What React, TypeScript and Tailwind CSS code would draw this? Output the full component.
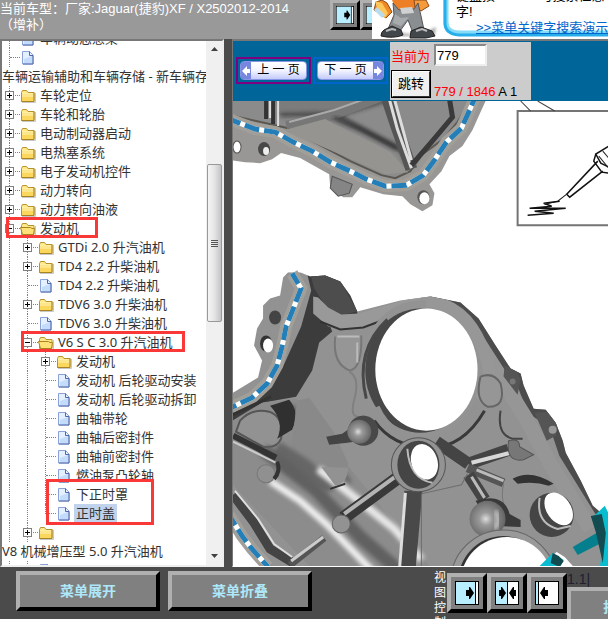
import { useState } from 'react';

interface TreeRow {
  label: string;
  level?: number;
  kind: 'folder' | 'open' | 'file' | 'text';
  last?: boolean;
}

const rows: TreeRow[] = [
  { label: '车辆动态悬架', level: 0, kind: 'file' },
  { label: '', level: 0, kind: 'file' },
  { label: '车辆运输辅助和车辆存储 - 新车辆存储', kind: 'text' },
  { label: '车轮定位', level: 0, kind: 'folder' },
  { label: '车轮和轮胎', level: 0, kind: 'folder' },
  { label: '电动制动器启动', level: 0, kind: 'folder' },
  { label: '电热塞系统', level: 0, kind: 'folder' },
  { label: '电子发动机控件', level: 0, kind: 'folder' },
  { label: '动力转向', level: 0, kind: 'folder' },
  { label: '动力转向油液', level: 0, kind: 'folder' },
  { label: '发动机', level: 0, kind: 'open' },
  { label: 'GTDi 2.0 升汽油机', level: 1, kind: 'folder' },
  { label: 'TD4 2.2 升柴油机', level: 1, kind: 'folder' },
  { label: 'TD4 2.2 升柴油机', level: 1, kind: 'file' },
  { label: 'TDV6 3.0 升柴油机', level: 1, kind: 'folder' },
  { label: 'TDV6 3.0 升柴油机', level: 1, kind: 'file' },
  { label: 'V6 S C 3.0 升汽油机', level: 1, kind: 'open' },
  { label: '发动机', level: 2, kind: 'folder' },
  { label: '发动机 后轮驱动安装', level: 2, kind: 'file' },
  { label: '发动机 后轮驱动拆卸', level: 2, kind: 'file' },
  { label: '曲轴带轮', level: 2, kind: 'file' },
  { label: '曲轴后密封件', level: 2, kind: 'file' },
  { label: '曲轴前密封件', level: 2, kind: 'file' },
  { label: '燃油泵凸轮轴', level: 2, kind: 'file' },
  { label: '下正时罩', level: 2, kind: 'file' },
  { label: '正时盖', level: 2, kind: 'file', last: true },
  { label: '', level: 1, kind: 'folder' },
  { label: 'V8 机械增压型 5.0 升汽油机', kind: 'text' },
  { label: '', level: 1, kind: 'file' },
];

function FolderIcon({ open }: { open: boolean }) {
  return (
    <svg width="16" height="16" viewBox="0 0 16 16" className="shrink-0">
      <path d="M2 14.5h13.5V5" fill="none" stroke="#c8c8c8" />
      <path d="M1.5 4.5l1-2h4l1.500 2h6v9h-12.500z" fill="#ffe98a" stroke="#b8932c" />
      {open ? (
        <path d="M.5 6.500h10l1.500 1h2.500l-1 6h-11z" fill="#ffe277" stroke="#a98420" />
      ) : (
        <path d="M2 6h11.500v7H2z" fill="#fbd75e" />
      )}
      {!open && <path d="M2 6h11.500M2 8h11.500" stroke="#fff4b8" />}
      {!open && <path d="M1.500 13.500h12.500v-9" fill="none" stroke="#a98420" />}
    </svg>
  );
}

function FileIcon() {
  return (
    <svg width="16" height="16" viewBox="0 0 16 16" className="shrink-0">
      <path d="M2.500 1.500h7l3.500 3.500v9H2.500z" fill="#e4f0ff" stroke="#8aa2d8" />
      <path d="M4 9l8-3v7H4z" fill="#c4dcfb" />
      <path d="M9.500 1.500v4H13v8.500H3" fill="none" stroke="#5069ac" />
    </svg>
  );
}

function Guide({ half = false }: { half?: boolean }) {
  return (
    <span className="flex h-full w-[18px] shrink-0 pl-[7px]">
      <span className={`${half ? 'h-1/2' : 'h-full'} border-l border-dotted border-[#808080]`} />
    </span>
  );
}

function Connector({ row }: { row: TreeRow }) {
  return (
    <span className="relative flex h-full w-[18px] shrink-0">
      <Guide half={row.last} />
      <span className="absolute top-[9px] left-[8px] w-[10px] border-t border-dotted border-[#808080]" />
      {row.kind !== 'file' && (
        <svg className="absolute top-[5px] left-[3px]" width="9" height="9" viewBox="0 0 9 9">
          <rect x=".5" y=".5" width="8" height="8" fill="#fff" stroke="#808080" />
          <path d={row.kind === 'folder' ? 'M2 4.500h5M4.500 2v5' : 'M2 4.500h5'} stroke="#000" />
        </svg>
      )}
    </span>
  );
}

function Tree() {
  const [selected, setSelected] = useState(25);

  return (
    <ul className="-mt-3 text-[13px] leading-[19px] whitespace-nowrap text-[#333]">
      {rows.map((row, index) => (
        <li key={index}>
          <button type="button" onClick={() => setSelected(index)} className="flex h-[19px] items-center text-left">
            {row.level !== undefined && (
              <>
                {row.level > 0 && <Guide />}
                {row.level > 1 && <Guide />}
                <Connector row={row} />
                {row.kind === 'file' ? <FileIcon /> : <FolderIcon open={row.kind === 'open'} />}
              </>
            )}
            {row.label && (
              <span className={row.kind === 'text' ? '' : index === selected ? 'ml-0.5 bg-[#c0d2ec] px-0.5' : 'ml-1'}>
                {row.label}
              </span>
            )}
          </button>
        </li>
      ))}
    </ul>
  );
}

function Scrollbar() {
  return (
    <div className="flex w-4 shrink-0 flex-col items-center bg-[#f0f0f0]">
      <svg width="15" height="17" viewBox="0 0 15 17">
        <path d="M4 10h7L7.500 6z" fill="#404040" />
      </svg>
      <div className="h-[106px]" />
      <div className="flex h-[158px] w-[15px] flex-col items-center justify-center gap-px rounded-xs border border-[#999] bg-linear-to-r from-[#f5f5f5] via-[#e4e4e4] to-[#c4c4c8]">
        <span className="h-px w-[7px] bg-[#555]" />
        <span className="h-px w-[7px] bg-[#555]" />
        <span className="h-px w-[7px] bg-[#555]" />
        <span className="h-px w-[7px] bg-[#555]" />
      </div>
      <svg className="mt-auto" width="15" height="17" viewBox="0 0 15 17">
        <path d="M4 6h7l-3.500 4z" fill="#404040" />
      </svg>
    </div>
  );
}

type View = 'left' | 'both' | 'right';

function ViewButton({ view, label, small = false }: { view: View; label: string; small?: boolean }) {
  return (
    <button
      type="button"
      aria-label={label}
      className={`flex shrink-0 items-center justify-center border-t-[#b0b0b0] border-r-black border-b-black border-l-[#b0b0b0] bg-[#808080] ${small ? 'h-[30px] w-[30px] border-[3px]' : 'h-10 w-10 border-4'}`}
    >
      <svg width={small ? 18 : 24} height={small ? 18 : 24} viewBox="0 0 24 24">
        <rect x=".5" y=".5" width="23" height="23" fill="#fff" stroke="#000" />
        {view === 'left' && <path d="M1 1h19v22H1z" fill="#b8eeff" />}
        {view === 'both' && <path d="M1 1h11v22H1z" fill="#b8eeff" />}
        {view === 'right' && <path d="M1 1h2v22H1z" fill="#b8eeff" />}
        <path d={view === 'left' ? 'M20.500 1v22' : view === 'both' ? 'M12.500 1v22' : 'M3.500 1v22'} stroke="#000" />
        {view === 'left' && <path d="M11 9h3V6h1l4 6-4 6h-1v-3h-3z" />}
        {view === 'both' && <path d="M4 9h2V6h1l4 6-4 6H6v-3H4zM21 9h-2V6h-1l-4 6 4 6h1v-3h2z" />}
        {view === 'right' && <path d="M13 9h-3V6H9l-4 6 4 6h1v-3h3z" />}
      </svg>
    </button>
  );
}

function Mascot() {
  return (
    <svg width="72" height="39" viewBox="0 0 72 39" className="shrink-0">
      <defs>
        <filter id="shade">
          <feGaussianBlur stdDeviation="1.500" />
        </filter>
      </defs>
      <path d="M20 30q25 10 44-3l-2 9H14z" fill="#999" filter="url(#shade)" />
      <path d="M4 2l6-2 5 3 5 9-6 6-7-5-5-3z" fill="#ee8a25" stroke="#8b4b18" />
      <path d="M3 1l7 2 6 10-3 5-7-7z" fill="#ffc65a" />
      <path d="M5 7l8 8-3 3-8-8z" fill="#b8dbed" />
      <path d="M20 0h31v5l-4 6H24z" fill="#ed8026" />
      <path d="M42 0h12l3 6-8 5-6-4z" fill="#f59b3c" stroke="#8b4b18" />
      <path d="M21 3l6 7 15-1 4-6 3 13 3 14-11 3-5-13-8 11-12-2 6-14z" fill="#8b8e90" stroke="#555" />
      <path d="M28 8l12-1 2 6-12 1z" fill="#cfd2d3" />
      <path d="M23 14l6 4 8-1-8 9-8-3z" fill="#a8abad" />
      <path d="M12 30l8-4 9 4 2 5q-10 4-22 1 0-4 3-6z" fill="#42474c" stroke="#222" />
      <path d="M39 31l10-4 11 4 3 5-9 2H38z" fill="#42474c" stroke="#222" />
      <path d="M14 31l6-2 4 1M44 31l6-2 5 2" fill="none" stroke="#bbb" strokeWidth="2" />
    </svg>
  );
}

function SearchAd() {
  return (
    <aside className="absolute top-0 right-0 flex h-[39px] w-[236px] overflow-hidden bg-white text-black">
      <Mascot />
      <svg className="absolute top-0 left-[70px]" width="166" height="39" viewBox="0 0 166 39">
        <path d="M4 0v22q0 11 13 11h149" fill="none" stroke="#86dcf8" strokeWidth="5" />
        <path d="M3 0v23q0 11 14 12h149" fill="none" stroke="#28aeea" strokeWidth="3" />
      </svg>
      <div className="relative -mt-3 ml-3 text-[13px] leading-4 whitespace-nowrap">
        <p>键盘按“Ctrl+F”可搜索任意</p>
        <p>字!</p>
        <a href="#search" className="ml-5 block text-[#0066cc] underline">&gt;&gt;菜单关键字搜索演示</a>
      </div>
    </aside>
  );
}

function PageButton({ label, next = false }: { label: string; next?: boolean }) {
  const arrow = (
    <span className="flex w-[10px] items-center justify-center bg-[#7786de]">
      <svg width="8" height="10" viewBox="0 0 8 10">
        <path d={next ? 'M0 3h3V0l5 5-5 5V7H0z' : 'M8 3H5V0L0 5l5 5V7h3z'} fill="#fff" />
      </svg>
    </span>
  );

  return (
    <button
      type="button"
      className={`border-2 p-0.5 ${next ? 'border-[#0066cc]' : 'border-[#800080]'}`}
    >
      <span className="flex h-[19px] w-[67px] rounded-sm border border-[#8795e4] bg-linear-to-b from-white via-[#f3f4ff] to-[#c4cbfa] text-[12px] leading-[17px] text-black">
        {!next && arrow}
        <span className="flex-1 text-center whitespace-nowrap">{label}</span>
        {next && arrow}
      </span>
    </button>
  );
}

function Toolbar() {
  const [page, setPage] = useState('779');

  return (
    <div className="flex h-[60px] shrink-0 items-start bg-[#006699]">
      <div className="flex gap-0.5 pt-4 pl-[3px]">
        <PageButton label="上 一 页" />
        <PageButton label="下 一 页" next />
      </div>
      <form
        onSubmit={(event) => event.preventDefault()}
        className="mt-px ml-0.5 grid h-[58px] w-[141px] grid-cols-[41px_1fr] content-start gap-x-0.5 bg-[#ccc] pt-0.5 pl-px text-[13px] whitespace-nowrap"
      >
        <label htmlFor="page" className="pt-0.5 leading-[22px] text-[red]">当前为</label>
        <input
          id="page"
          value={page}
          onChange={(event) => setPage(event.target.value)}
          className="h-[22px] w-[53px] border-2 border-t-[#888] border-r-[#eee] border-b-[#eee] border-l-[#888] bg-white px-px text-[13px] text-black"
        />
        <button type="submit" className="mt-0.5 h-7 w-10 border-2 border-t-white border-r-[#333] border-b-[#333] border-l-white bg-[#f0f0f0] text-[13px] text-black outline outline-black -outline-offset-1">
          跳转
        </button>
        <p className="pt-4 leading-4 text-black">
          <span className="text-[red]">779 / 1846</span> A 1
        </p>
      </form>
    </div>
  );
}

const upperSeam = 'M229 119L237 122 255 129 275 132 293 142 312 151 330 162 350 171 366 179 385 186 406 185 423 175 434 160 446 142 461 128 470 108 476 94';
const lowerSeam = 'M292 273L301 288 294 306 286 326 282 346 277 365 267 383 252 397 231 407';
const cornerSeam = 'M229 514L242 535 252 548 268 566';

function Seam({ d }: { d: string }) {
  return (
    <g fill="none">
      <path d={d} stroke="#a29e98" strokeWidth="12" />
      <path d={d} stroke="#fff" strokeWidth="5" />
      <path d={d} stroke="#247fb8" strokeWidth="5" strokeDasharray="15 5" strokeDashoffset="3" />
    </g>
  );
}

function EngineDrawing() {
  return (
    <svg
      className="min-h-0 w-full flex-1"
      viewBox="233 101 375 464"
      preserveAspectRatio="xMinYMin slice"
      role="img"
      aria-label="正时盖"
    >
      <defs>
        <filter id="soft">
          <feGaussianBlur stdDeviation="2" />
        </filter>
        <radialGradient id="ball" cx=".45" cy=".5" r=".6">
          <stop offset="0" stopColor="#ddd" />
          <stop offset=".3" stopColor="#999" />
          <stop offset="1" stopColor="#5c5c5c" />
        </radialGradient>
        <clipPath id="cover">
          <path d="M233 392L258 377 262 360 254 345 257 328 263 318V305L270 298 280 295 283 277 288 272H300L310 276 325 275 340 281 350 295 357 311 400 300 430 296 460 302 478 318 495 345 510 368 520 373 523 385 533 408 545 409 555 422 562 440 565 452 580 480 592 505 604 515V566H250L233 543z" />
        </clipPath>
      </defs>

      {/* sump rail */}
      <path d="M230 99H486L480 112 472 130 462 146 449 156 441 171 429 184 434 193 432 205 422 211 410 204 402 196 383 194 360 187 352 197H343L330 187 329 174 300 158 281 153 272 159 260 163 245 162 230 160z" fill="#989795" />
      <path d="M230 99H471L457 122 443 139 422 154 410 171 395 178 381 175 350 161 318 144 287 128 230 115z" fill="#8b8b8b" />
      <path d="M230 99H471L457 122 443 139 422 154 410 171 395 178 381 175 350 161 318 144 287 128 230 115" fill="none" stroke="#5b5751" strokeWidth="2" />
      <path d="M276 99L278 115 294 115 335 118 385 99z" fill="#7c7c7c" />
      <path d="M280 115L335 114 400 150 409 164M290 127L338 115 389 99" fill="none" stroke="#333" strokeWidth="3" filter="url(#soft)" />
      <path d="M286 125L335 115 390 94" fill="none" stroke="#777" strokeWidth="8" />
      <path d="M289 122L334 110 373 96" fill="none" stroke="#aaa" strokeWidth="2" />
      <path d="M284 130L325 119 390 152 408 172 385 174z" fill="#969490" />
      <path d="M334 118L362 130 398 148" fill="none" stroke="#222" strokeWidth="3" filter="url(#soft)" />
      <path d="M387 99L395 123 411 169" fill="none" stroke="#555" strokeWidth="12" />
      <path d="M389 99L397 129 411 168M394 99L411 160" fill="none" stroke="#ddd" strokeWidth="3" />
      <path d="M266 99V119M273 99V124" stroke="#333" strokeWidth="4" />
      <path d="M270 99V118M278 99V126" stroke="#ddd" strokeWidth="2" />
      <path d="M449 99L452 117 431 142 418 157 411 165" fill="none" stroke="#3a3a3a" strokeWidth="5" />
      <path d="M332 176l20 8-3 9-11 3-8-8z" fill="#858585" stroke="#555" />
      <Seam d={upperSeam} />
      <ellipse cx="237" cy="147" rx="4" ry="6" fill="#fff" stroke="#555" />
      <ellipse cx="264" cy="149" rx="6" ry="7" fill="#484848" />
      <ellipse cx="266" cy="151" rx="3" ry="4" fill="#eee" />
      <ellipse cx="423" cy="197" rx="6" ry="7" fill="#555" />
      <ellipse cx="424" cy="198" rx="5" ry="6" fill="#fff" />

      {/* tool inset */}
      <path d="M611 111H517v114h94" fill="none" stroke="#747474" strokeWidth="2" />
      <path d="M520 101l10 10M537 101l17 10" stroke="#444" />
      <path d="M608 146l-13 8 5 9 8 4M595 154l-2 7 8 11 8 1M597 161l-31 33 3 3 33-26" fill="none" stroke="#111" strokeWidth="1.500" />
      <path d="M598 156l10 12M602 151l6 7M566 194l-9 7-13 3" fill="none" stroke="#222" />
      <path d="M559 201l-16 2 8 3-22 2 36 0-31 3 19 2-26 2" fill="none" stroke="#111" strokeWidth="1.500" />

      {/* timing cover */}
      <g clipPath="url(#cover)">
        <path d="M233 270h375v296H233z" fill="#929292" />
        <path d="M306 269L311 290 301 326 283 366 263 392 231 406V424L262 402 296 396 312 370 319 342 332 331 325 314 357 315V290L338 274z" fill="#3c3c3c" />
        <path d="M310 273L338 276 357 311 340 315 325 305 314 288z" fill="#4d4d4d" />
        <path d="M313 296L318 297 328 307 341 314 358 313 430 292 429 310 387 317 356 329 328 326 313 313z" fill="#999" />
        <path d="M320 321L340 329 363 327 387 318" fill="none" stroke="#333" strokeWidth="2" />
        <path d="M430 296L460 302 478 318 495 345 510 368 520 374 533 408 555 422 565 452 604 515" fill="none" stroke="#4c4c4c" strokeWidth="14" />
        <path d="M419 303L451 311 472 333 497 372 526 419 550 464 590 528" fill="none" stroke="#969696" strokeWidth="15" />
        <path d="M504 365l11 4 5 10-3 15-14-18zM534 412l14-1 9 14-2 10-9 5z" fill="#555" />
        <circle cx="512" cy="381" r="3" fill="#777" />
        <circle cx="552" cy="429" r="4" fill="#999" />

        <ellipse cx="420" cy="370" rx="60" ry="70" fill="#939393" />
        <path d="M387 319Q354 350 366 398" fill="none" stroke="#484848" strokeWidth="3" />
        <ellipse cx="420" cy="370" rx="55" ry="62" fill="#474747" />
        <path d="M426 300Q464 304 481 345T478 400" fill="none" stroke="#979797" strokeWidth="12" />
        <path d="M375 407Q390 440 425 440T478 408" fill="none" stroke="#929292" strokeWidth="9" />
        <path d="M374 420Q392 446 427 447T484 410" fill="none" stroke="#393939" strokeWidth="3" />
        <ellipse cx="426" cy="369" rx="51" ry="61" fill="#fff" />

        <path d="M335 336q-3 28 15 34 12-3 11-35" fill="#969696" stroke="#777" strokeWidth="2" />
        <path d="M337 336h22M357 342v20" stroke="#bbb" strokeWidth="2" />
        <path d="M349 371q11 6 5 28t11 16" fill="none" stroke="#808080" strokeWidth="2" />
        <path d="M480 376q-6 24 7 30 19 1 13-23-7-12-20-7" fill="#969696" stroke="#666" strokeWidth="2" />
        <path d="M500 410q-4 24 12 28h10" fill="none" stroke="#444" strokeWidth="2" />

        <path d="M296 398L346 463 430 566H310L229 480V422L262 402z" fill="#8c8c8c" />
        <path d="M292 405L326 450 350 482" fill="none" stroke="#686868" strokeWidth="5" filter="url(#soft)" />
        <path d="M240 420q12-13 29-9 15 5 12 27-4 10-18 8l-27-15z" fill="#929292" stroke="#555" strokeWidth="2" />
        <path d="M270 405q15 16 7 33l15-9q8-18-3-30z" fill="#303030" />
        <path d="M297 400L309 397 334 432 348 463 341 486 323 480 291 448z" fill="#898989" />
        <path d="M280 441L310 460 337 487 326 492 270 456" fill="#666" filter="url(#soft)" />
        <path d="M263 449L315 489 360 536 399 570" fill="none" stroke="#606060" strokeWidth="13" filter="url(#soft)" />
        <path d="M270 480L300 500 326 523 372 570" fill="none" stroke="#f0f0f0" strokeWidth="7" filter="url(#soft)" />
        <path d="M318 468L345 489 394 528 421 559" fill="none" stroke="#e8e8e8" strokeWidth="8" filter="url(#soft)" />
        <path d="M233 435l43 22" stroke="#333" strokeWidth="6" />
        <path d="M233 441l43 21" stroke="#ccc" strokeWidth="2" />
        <circle cx="266" cy="473" r="9" fill="#909090" stroke="#777" />
        <path d="M277 461q4 9-3 17" fill="none" stroke="#333" strokeWidth="4" />
        <path d="M321 466l14 19q12-2 13-18" fill="#929292" />
        <path d="M330 488l15-5" stroke="#333" strokeWidth="2" />
        <path d="M343 517l56-41" stroke="#393939" strokeWidth="13" />
        <path d="M344 513l52-38" stroke="#b4b4b4" strokeWidth="4" />
        <circle cx="341" cy="523" r="9" fill="#929292" stroke="#666" />
        <path d="M233 494L254 522 270 548 293 562" fill="none" stroke="#444" strokeWidth="9" />
        <path d="M235 490L258 518 274 543 292 556" fill="none" stroke="#ddd" strokeWidth="2" />
        <path d="M290 564l34-27" stroke="#555" strokeWidth="7" />
        <path d="M291 560l32-24" stroke="#ccc" strokeWidth="3" />

        <path d="M404 490L398 570H415L422 490" fill="#494949" />
        <path d="M405 492l-6 78" stroke="#ddd" strokeWidth="3" />
        <path d="M436 441L468 463M468 463L508 449" stroke="#444" strokeWidth="12" />
        <circle cx="418" cy="464" r="27" fill="#939393" stroke="#555" />
        <ellipse cx="418" cy="464" rx="21" ry="24" fill="#454545" />
        <path d="M407 448q2 30 25 34" fill="none" stroke="#bbb" strokeWidth="2" />
        <ellipse cx="424" cy="461" rx="13" ry="18" transform="rotate(-18 424 461)" fill="#fff" />
        <path d="M471 462l39-10" stroke="#d8d8d8" strokeWidth="4" />
        <path d="M467 467l36 15" stroke="#555" strokeWidth="9" />
        <path d="M476 469l27 11" stroke="#bbb" strokeWidth="3" />
        <path d="M468 474l16 25" stroke="#444" strokeWidth="12" />
        <path d="M471 476l13 21" stroke="#bbb" strokeWidth="3" />
        <path d="M467 473L461 484 421 493v73" fill="none" stroke="#6d6d6d" />
        <path d="M508 440q11-3 11 6l14 8-10 5q-18 3-15-19z" fill="#777" stroke="#555" />
        <path d="M512 478q18-10 41 5l-5 2q-14-5-31-2z" fill="#333" />
        <path d="M503 483q-4 18 5 30" fill="none" stroke="#777" />

        <path d="M326 436l16-3 11-8 10 1-2 14-14 2-18 2z" fill="#444" />
        <circle cx="363" cy="430" r="15" fill="#494949" />
        <circle cx="359" cy="431" r="12" fill="url(#ball)" />
        <path d="M475 500q28-9 34 13l11 6v7l-29-1z" fill="#3a3a3a" />
        <circle cx="487" cy="518" r="18" fill="url(#ball)" />
        <path d="M495 510q6 11-1 18" fill="none" stroke="#e0e0e0" strokeWidth="3" filter="url(#soft)" />
        <ellipse cx="551" cy="514" rx="22" ry="22" fill="#454545" />
        <path d="M539 497q-4 25 18 31l13-3" fill="none" stroke="#bbb" strokeWidth="2" />
        <ellipse cx="558" cy="508" rx="12" ry="18" transform="rotate(-35 558 508)" fill="#fff" />
        <ellipse cx="503" cy="582" rx="53" ry="53" fill="#999" stroke="#666" />
        <ellipse cx="503" cy="583" rx="46" ry="48" fill="#333" />
        <ellipse cx="506" cy="582" rx="46" ry="46" fill="#fff" />
      </g>
      <Seam d={lowerSeam} />
      <path d="M233 414l38-18" stroke="#333" strokeWidth="3" />
      <path d="M230 514L266 568H230z" fill="#fff" />
      <Seam d={cornerSeam} />
      <ellipse cx="275" cy="317" rx="6" ry="7" fill="#444" />
      <ellipse cx="266" cy="343" rx="6" ry="8" fill="#333" />
      <ellipse cx="268" cy="345" rx="5" ry="7" fill="#fff" />

      {/* highlighted sealant arrow */}
      <path d="M538 566l18-15 8 5 9 10z" fill="#fff" />
      <path d="M538 566l14-14 11 7-4 7z" fill="#0bbbd0" />
      <path d="M552 552l6 3 5 5-4 6-9-4z" fill="#124b50" />
      <path d="M572 546l22-13 16-7v11l-33 17z" fill="#057f8d" />
      <path d="M591 517l13-12 5 10v52h-10l4-34z" fill="#09bdd1" />
      <path d="M590 515l11-2 4 19-3 30-7-31z" fill="#124b50" />
    </svg>
  );
}

function MenuButton({ children }: { children: string }) {
  return (
    <button
      type="button"
      className="h-10 w-36 border-4 border-t-[#b0b0b0] border-r-black border-b-black border-l-[#b0b0b0] bg-[#808080] text-[14px] font-bold text-[#aee8f8]"
    >
      {children}
    </button>
  );
}

export default function App() {
  return (
    <div className="relative flex h-screen flex-col overflow-hidden bg-[#4b4b4b] font-['Liberation_Sans','Noto_Sans_CJK_SC',sans-serif]">
      <header className="flex h-[39px] shrink-0 justify-between overflow-hidden bg-[#999] text-white">
        <p className="w-[300px] pt-px text-[13px] leading-4">当前车型：厂家:Jaguar(捷豹)XF / X2502012-2014（增补）</p>
        <div className="mr-[218px] flex shrink-0">
          <ViewButton view="left" label="显示左侧" small />
          <ViewButton view="left" label="显示两侧" small />
        </div>
      </header>
      <SearchAd />

      <main className="flex min-h-0 flex-1 gap-2">
        <nav className="relative flex w-56 shrink-0 border-2 border-t-[#777] border-r-[#eee] border-b-[#eee] border-l-[#777] bg-white font-['Noto_Sans','Noto_Sans_CJK_SC',sans-serif]">
          <div className="min-w-0 flex-1 overflow-hidden">
            <Tree />
          </div>
          <Scrollbar />
          <span className="absolute top-[176px] left-1 h-[21px] w-[92px] border-3 border-[#fa3838]" />
          <span className="absolute top-[290px] left-[19px] h-[21px] w-[164px] border-3 border-[#fa3838]" />
          <span className="absolute top-[438px] left-[44px] h-[46px] w-[108px] border-3 border-[#fa3838]" />
        </nav>
        <section className="flex min-w-0 flex-1 flex-col border-t-2 border-b border-l border-t-[#777] border-b-white border-l-[#777] bg-white">
          <Toolbar />
          <EngineDrawing />
        </section>
      </main>

      <footer className="flex h-[52px] shrink-0 items-start overflow-hidden pl-4">
        <div className="flex shrink-0 gap-2 pt-1">
          <MenuButton>菜单展开</MenuButton>
          <MenuButton>菜单折叠</MenuButton>
        </div>
        <div className="ml-auto flex shrink-0 pt-1">
          <p className="w-[13px] text-[12px] leading-[15px] break-all text-white">视图控制1</p>
          <div className="flex pt-0.5">
            <ViewButton view="left" label="左视图" />
            <ViewButton view="both" label="双视图" />
            <ViewButton view="right" label="右视图" />
          </div>
          <div className="w-[41px] overflow-hidden">
            <p className="text-[14px] leading-4 text-[#202030]">1.1|</p>
            <button
              type="button"
              className="h-10 w-20 border-4 border-t-[#b0b0b0] border-r-black border-b-black border-l-[#b0b0b0] bg-[#808080] pl-5 text-[14px] font-bold text-[#aee8f8]"
            >
              打印
            </button>
          </div>
        </div>
      </footer>
    </div>
  );
}
